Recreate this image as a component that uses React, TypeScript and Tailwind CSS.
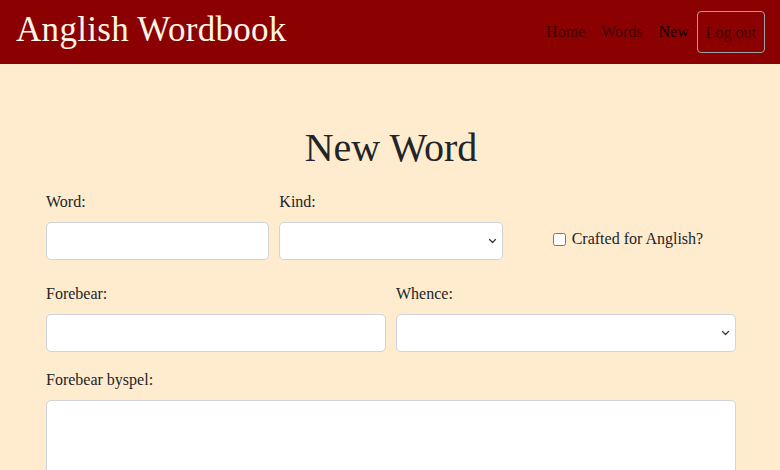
import React from "react";

const serif = "font-['Liberation_Serif','DejaVu_Serif',serif]";

function Field({ label, children }: { label: string; children: React.ReactNode }) {
  return (
    <div className="flex flex-col">
      <label className="mb-[8px] text-[16px] leading-6 text-[#212529]">{label}</label>
      {children}
    </div>
  );
}

const inputCls =
  "h-[38px] w-full rounded-[5px] border border-[#ced4da] bg-white px-3 text-[16px] outline-none";

function Select() {
  return (
    <div className="relative">
      <select className={inputCls + " appearance-none"} defaultValue="">
        <option value=""></option>
      </select>
      <svg
        className="pointer-events-none absolute right-[6px] top-[15px]"
        width="9"
        height="8"
        viewBox="0 0 16 16"
      >
        <path d="M2 5l6 6 6-6" fill="none" stroke="#343a40" strokeWidth="2.5" strokeLinecap="round" strokeLinejoin="round" />
      </svg>
    </div>
  );
}

export default function App() {
  return (
    <div className={`min-h-[470px] bg-[#ffebcd] ${serif}`}>
      <header className="flex h-16 items-center justify-between bg-[#8b0000] pl-4 pr-[15px]">
        <h1 className="-mt-[6px] text-[35px] leading-none tracking-[0.3px] text-[#fdf5e6]">Anglish Wordbook</h1>
        <nav className="flex items-center text-[16px]">
          <a className="px-2 text-[#3f0000]">Home</a>
          <a className="px-2 text-[#3f0000]">Words</a>
          <a className="pl-2 pr-[8px] text-[#0e0000]">New</a>
          <button className="h-[42px] rounded-[4px] border border-[#a0a0a0] px-[8px] pt-[2px] text-[16px] text-[#3f0000]">
            Log out
          </button>
        </nav>
      </header>

      <main className="ml-[46px] w-[690px] pt-[64px]">
        <h2 className="mb-[22px] text-center text-[40px] leading-none text-[#212529]">New Word</h2>

        <div className="grid grid-cols-3 gap-x-[10px]">
          <Field label="Word:">
            <input className={inputCls} />
          </Field>
          <Field label="Kind:">
            <Select />
          </Field>
          <div className="flex items-end pb-[9px] pl-[40px]">
            <label className="flex items-center gap-[6px] text-[16px] text-[#212529]">
              <input type="checkbox" className="h-[13px] w-[13px]" />
              Crafted for Anglish?
            </label>
          </div>
        </div>

        <div className="mt-[22px] grid grid-cols-2 gap-x-[10px]">
          <Field label="Forebear:">
            <input className={inputCls} />
          </Field>
          <Field label="Whence:">
            <Select />
          </Field>
        </div>

        <div className="mt-[16px]">
          <Field label="Forebear byspel:">
            <textarea className="h-[120px] w-full resize-none rounded-[5px] border border-[#ced4da] bg-white px-3 py-2 outline-none" />
          </Field>
        </div>
      </main>
    </div>
  );
}
